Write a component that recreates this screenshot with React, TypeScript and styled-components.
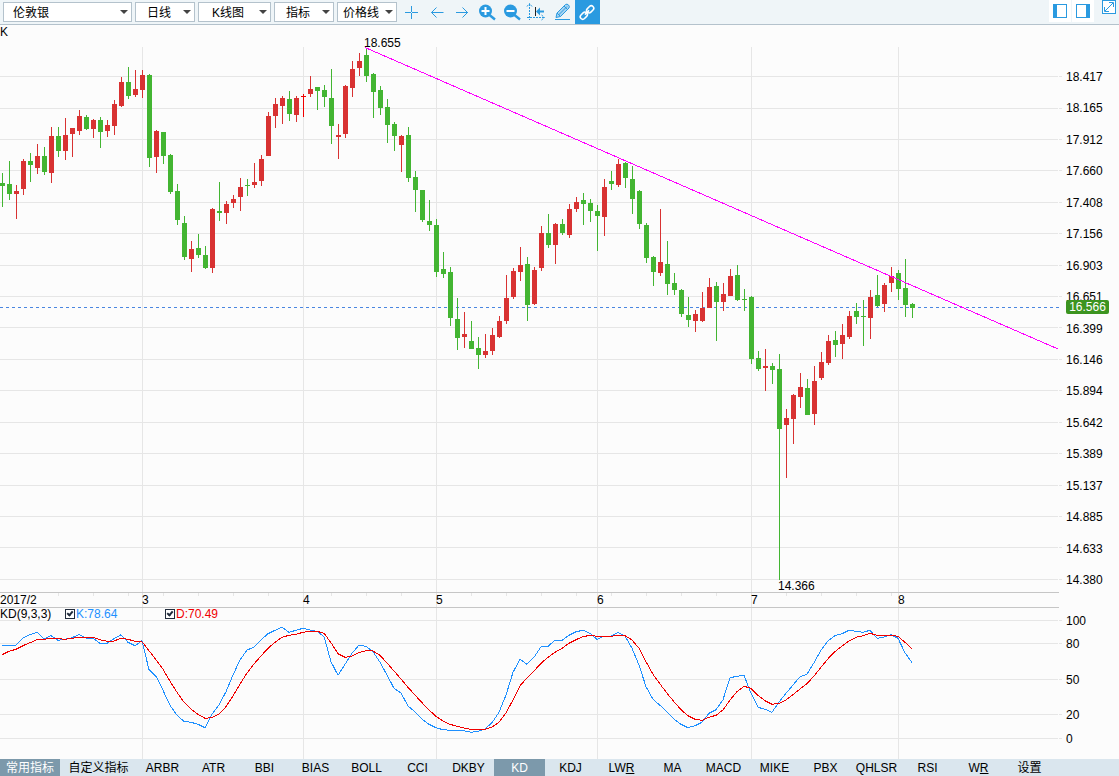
import React, { useState } from 'react';
import styled, { createGlobalStyle, css } from 'styled-components';

const BLUE = '#2a9ae0';
const UP = '#d83232';
const DOWN = '#43b532';
const GRID = '#e6e6e6';
const FONT = '"Liberation Sans", "Noto Sans CJK SC", sans-serif';

const GlobalStyle = createGlobalStyle`
  *, *::before, *::after { box-sizing: border-box; }
  body {
    margin: 0;
    background: #fcfcfc;
    color: #000;
    font: 12px/14px ${FONT};
  }
`;

/* ---------- data ---------- */

type Candle = [kind: 'u' | 'd' | 'f', high: number, top: number, bottom: number, low: number];

const STEP = 7;
const PRICE_TOP = 25;
const KD_TOP = 608;

const candles: Candle[] = [
  ['d', 173, 183, 186, 207], ['d', 161, 184, 194, 200], ['u', 185, 191, 194, 219], ['u', 159, 161, 189, 195],
  ['d', 153, 161, 165, 182], ['u', 144, 156, 168, 174], ['d', 147, 156, 172, 175], ['u', 127, 136, 173, 183],
  ['d', 127, 136, 151, 157], ['u', 118, 135, 151, 160], ['u', 128, 128, 134, 157], ['u', 110, 116, 131, 135],
  ['d', 115, 117, 129, 130], ['u', 119, 120, 129, 138], ['d', 117, 120, 132, 148], ['u', 120, 125, 131, 137],
  ['u', 100, 104, 126, 135], ['u', 77, 82, 106, 107], ['d', 67, 82, 96, 99], ['u', 70, 89, 95, 97],
  ['u', 70, 75, 90, 98], ['d', 74, 75, 158, 167], ['u', 130, 131, 157, 173], ['d', 132, 132, 156, 164],
  ['d', 154, 155, 192, 194], ['d', 184, 191, 220, 225], ['d', 216, 223, 257, 260], ['u', 241, 249, 259, 272],
  ['d', 234, 248, 255, 258], ['d', 246, 255, 268, 269], ['u', 208, 209, 268, 273], ['d', 182, 211, 213, 221],
  ['u', 201, 204, 213, 224], ['u', 195, 199, 203, 208], ['u', 178, 187, 197, 211], ['d', 179, 185, 186, 196],
  ['u', 163, 182, 185, 188], ['u', 155, 159, 181, 186], ['u', 112, 116, 156, 156], ['u', 98, 104, 116, 128],
  ['u', 96, 98, 106, 124], ['d', 91, 99, 114, 121], ['u', 96, 98, 115, 122], ['f', 94, 96, 97, 117],
  ['u', 76, 89, 94, 97], ['d', 87, 87, 91, 110], ['d', 85, 90, 97, 107], ['d', 69, 98, 126, 144],
  ['u', 124, 135, 137, 159], ['u', 85, 86, 134, 138], ['u', 61, 69, 88, 97], ['u', 53, 61, 68, 76],
  ['d', 48, 55, 76, 82], ['d', 73, 74, 92, 118], ['d', 86, 90, 108, 115], ['d', 99, 107, 125, 143],
  ['d', 122, 124, 136, 151], ['u', 135, 136, 145, 172], ['d', 127, 135, 178, 182], ['d', 171, 177, 190, 212],
  ['d', 190, 190, 220, 222], ['d', 200, 221, 225, 231], ['d', 219, 225, 272, 277], ['d', 252, 269, 274, 278],
  ['d', 267, 272, 318, 326], ['d', 298, 319, 338, 350], ['u', 312, 334, 337, 348], ['d', 321, 341, 349, 349],
  ['d', 337, 348, 355, 369], ['u', 334, 351, 355, 358], ['u', 328, 335, 351, 355], ['u', 316, 321, 337, 338],
  ['u', 275, 298, 321, 324], ['u', 268, 271, 297, 299], ['u', 247, 265, 272, 281], ['d', 257, 264, 305, 321],
  ['u', 267, 270, 304, 305], ['u', 226, 233, 268, 271], ['d', 214, 233, 245, 248], ['u', 223, 224, 245, 264],
  ['d', 219, 224, 233, 235], ['u', 204, 209, 235, 238], ['u', 197, 202, 209, 212], ['d', 193, 200, 204, 225],
  ['d', 199, 203, 211, 222], ['d', 205, 211, 216, 251], ['u', 179, 187, 217, 236], ['d', 171, 181, 184, 190],
  ['u', 159, 164, 185, 187], ['d', 162, 163, 178, 188], ['d', 166, 179, 199, 214], ['d', 190, 191, 224, 229],
  ['d', 223, 225, 258, 263], ['d', 256, 257, 272, 286], ['u', 209, 262, 273, 276], ['d', 241, 264, 284, 295],
  ['d', 273, 283, 290, 295], ['d', 289, 290, 314, 317], ['d', 297, 315, 320, 327], ['u', 310, 314, 321, 332],
  ['u', 292, 308, 321, 322], ['u', 278, 287, 308, 308], ['d', 282, 286, 302, 341], ['u', 283, 294, 302, 311],
  ['u', 269, 276, 296, 296], ['d', 265, 275, 300, 301], ['d', 289, 299, 300, 311], ['d', 296, 297, 359, 364],
  ['d', 351, 358, 369, 371], ['u', 349, 366, 368, 391], ['d', 363, 366, 370, 384], ['d', 354, 369, 429, 580],
  ['u', 409, 418, 425, 478], ['u', 394, 395, 419, 444], ['u', 373, 387, 397, 408], ['d', 379, 388, 415, 415],
  ['u', 366, 381, 414, 425], ['u', 352, 362, 378, 380], ['u', 335, 341, 363, 365], ['d', 331, 340, 345, 357],
  ['u', 324, 335, 344, 359], ['u', 311, 316, 337, 339], ['d', 303, 311, 317, 324], ['d', 300, 316, 317, 346],
  ['u', 290, 297, 318, 339], ['d', 275, 295, 306, 307], ['u', 283, 285, 304, 312], ['u', 267, 276, 283, 292],
  ['d', 270, 273, 289, 300], ['d', 259, 288, 305, 317], ['d', 303, 304, 308, 318],
];

/* Oscillator samples, in thirds of a pixel below y = 585. */
const kLine = [
  182, 182, 181, 159, 149, 142, 161, 152, 166, 163, 158, 149, 159, 160, 175, 175, 161, 149, 172, 182, 167, 254,
  274, 316, 361, 391, 409, 412, 418, 428, 388, 360, 320, 270, 225, 195, 187, 165, 146, 136, 127, 142, 136, 130,
  135, 139, 155, 230, 271, 238, 205, 180, 184, 200, 232, 270, 310, 324, 363, 380, 402, 418, 428, 434, 436, 436,
  437, 442, 439, 432, 413, 382, 330, 262, 223, 238, 217, 185, 184, 166, 166, 151, 140, 136, 145, 163, 154, 154,
  142, 153, 190, 240, 305, 343, 361, 381, 402, 418, 428, 422, 412, 385, 374, 344, 278, 274, 271, 325, 367, 373,
  382, 351, 325, 300, 275, 268, 233, 196, 167, 152, 146, 136, 139, 142, 136, 160, 156, 149, 160, 203, 233,
];
const dLine = [
  209, 199, 193, 182, 173, 164, 163, 160, 161, 163, 160, 157, 157, 157, 164, 169, 168, 160, 163, 169, 170, 197,
  224, 253, 289, 322, 352, 372, 388, 400, 398, 387, 365, 333, 297, 264, 237, 213, 190, 172, 157, 151, 148, 142,
  139, 139, 145, 173, 206, 217, 213, 203, 197, 198, 211, 234, 258, 282, 307, 330, 353, 375, 394, 408, 418, 424,
  429, 433, 433, 433, 426, 412, 383, 345, 302, 279, 258, 235, 217, 202, 190, 175, 164, 155, 151, 154, 154, 154,
  151, 152, 165, 190, 230, 268, 297, 325, 350, 374, 392, 403, 406, 397, 391, 375, 345, 320, 304, 310, 331, 347,
  358, 355, 345, 329, 312, 296, 273, 247, 221, 200, 183, 168, 157, 152, 145, 151, 152, 151, 154, 172, 191,
];
const toPoints = (line: number[]) => line.map((v, i) => `${2 + STEP * i},${(585 + v / 3).toFixed(1)}`).join(' ');

const priceLabels = [
  '18.417', '18.165', '17.912', '17.660', '17.408', '17.156', '16.903', '16.651', '16.399',
  '16.146', '15.894', '15.642', '15.389', '15.137', '14.885', '14.633', '14.380',
];
const priceGrid = [76, 108, 139, 170, 202, 233, 265, 296, 327, 359, 390, 422, 453, 485, 516, 547, 579];
const kdGrid: [number, string][] = [[620, '100'], [643, '80'], [679, '50'], [714, '20'], [738, '0']];
const months: [number, string][] = [[142, '3'], [303, '4'], [436, '5'], [597, '6'], [751, '7'], [898, '8']];
const weekTicks = [
  58, 93, 128, 163, 198, 233, 268, 331, 366, 401, 471, 506, 541, 576, 611, 646, 681, 716, 786, 821, 856, 891,
];

/* ---------- layout ---------- */

const Page = styled.div`
  display: flex;
  flex-direction: column;
  min-height: 100vh;
`;

const Toolbar = styled.header`
  display: flex;
  align-items: flex-start;
  height: 25px;
  background: #eff5f8;
  border-bottom: 1px solid #b4c2cc;
`;

const Pickers = styled.div`
  display: flex;
  gap: 3px;
  padding: 2px 3px;
`;

const PickerBox = styled.div<{ $width: number }>`
  position: relative;
  width: ${(p) => p.$width}px;
  height: 20px;
  &::after {
    content: '';
    position: absolute;
    right: 4px;
    top: 8px;
    border: 4px solid transparent;
    border-top-color: #444;
    border-bottom-width: 0;
    pointer-events: none;
  }
`;

const Picker = styled.select<{ $indent: number }>`
  appearance: none;
  width: 100%;
  height: 100%;
  padding: 1px 0 0 ${(p) => p.$indent}px;
  border: 1px solid #b4c2cc;
  border-radius: 0;
  background: #fff;
  color: #000;
  font: 12px/18px ${FONT};
`;

const Tools = styled.div`
  display: flex;
  flex: 1;
`;

const ToolButton = styled.button<{ $active?: boolean }>`
  width: 25px;
  height: 24px;
  padding: 0;
  border: 0;
  background: ${(p) => (p.$active ? BLUE : 'transparent')};
  svg { display: block; }
`;

const PanelButtons = styled.div`
  display: flex;
  gap: 1px;
  padding-right: 2px;
`;

const PanelButton = styled.button<{ $plain?: boolean }>`
  width: 22px;
  height: 22px;
  padding: 0;
  border: 0;
  background: ${(p) => (p.$plain ? 'transparent' : '#fff')};
  svg { display: block; }
`;

const ChartRow = styled.section`
  display: flex;
`;

const Stack = styled.div`
  display: grid;
  flex: 1;
  min-width: 0;
  > * { grid-area: 1 / 1; }
`;

const Plot = styled.svg<{ $height: number }>`
  display: block;
  width: 100%;
  height: ${(p) => p.$height}px;
  font: 12px ${FONT};
`;

const Title = styled.h1`
  align-self: start;
  margin: 0;
  font: 12px/14px ${FONT};
`;

const Axis = styled.div<{ $top: number }>`
  position: relative;
  display: flex;
  flex-direction: column;
  justify-content: space-between;
  width: 57px;
  padding: ${(p) => p.$top}px 0 0 4px;
`;

const PriceAxis = styled(Axis)`
  padding-bottom: 21px;
`;

const PriceTag = styled.output`
  position: absolute;
  left: 4px;
  top: 275px;
  width: 43px;
  height: 14px;
  border-radius: 2px;
  background: #3c9420;
  color: #fff;
  text-align: center;
`;

const KdAxis = styled(Axis)`
  display: block;
`;

const KdLabel = styled.div<{ $space: number }>`
  margin-bottom: ${(p) => p.$space}px;
`;

const Legend = styled.div`
  display: flex;
  align-self: start;
  height: 12px;
  line-height: 12px;
`;

const LegendName = styled.span`
  width: 65px;
`;

const LegendItem = styled.label<{ $color: string }>`
  display: flex;
  align-items: center;
  gap: 1px;
  width: 100px;
  color: ${(p) => p.$color};
`;

const Check = styled.input`
  appearance: none;
  position: relative;
  width: 10px;
  height: 10px;
  margin: 0;
  border: 1px solid #222c3c;
  background: #fff;
  &:checked::after {
    content: '';
    position: absolute;
    left: 2px;
    top: 0;
    width: 4px;
    height: 6px;
    border: solid #222c3c;
    border-width: 0 2px 2px 0;
    transform: rotate(40deg);
  }
`;

const TabBar = styled.nav`
  display: flex;
  height: 17px;
  background: #dae6ee;
`;

const activeTab = css`
  background: #7c99ab;
  color: #fff;
`;

const Tab = styled.button<{ $width: number; $active?: boolean }>`
  width: ${(p) => p.$width}px;
  padding: 2px 0 0;
  border: 0;
  background: transparent;
  color: #000;
  font: 12px/15px ${FONT};
  white-space: nowrap;
  ${(p) => p.$active && activeTab}
`;

/* ---------- icons ---------- */

type IconName = 'cross' | 'left' | 'right' | 'in' | 'out' | 'axis' | 'pencil' | 'link';

const Magnifier = ({ plus }: { plus?: boolean }) => (
  <>
    <circle cx="10.500" cy="11" r="6.500" fill={BLUE} />
    <path d="M14.500 15l5.500 4.500" stroke={BLUE} strokeWidth="2.400" fill="none" />
    <path d={plus ? 'M6.500 11h8M10.500 7v8' : 'M6.500 11h8'} stroke="#fff" strokeWidth="2" fill="none" />
  </>
);

const icons: Record<IconName, React.ReactNode> = {
  cross: <path d="M5 12.500h6M12 12.500h6M11.500 6v6M11.500 13v6" stroke={BLUE} fill="none" />,
  left: <path d="M6.500 12.500h12M11.500 7.500l-5 5 5 5" stroke={BLUE} fill="none" />,
  right: <path d="M6 12.500h12M12.500 7.500l5 5-5 5" stroke={BLUE} fill="none" />,
  in: <Magnifier plus />,
  out: <Magnifier />,
  axis: (
    <>
      <path d="M4.500 4v16M2 17.500h17M2 6.500l2.500-3 2.500 3M16.500 15l3 2.500-3 2.500" stroke={BLUE} fill="none" strokeDasharray="2 1" />
      <path d="M10.500 7v9" stroke="#222" fill="none" />
      <path d="M11 11.500l4-4v3h4v2h-4v3z" fill={BLUE} />
    </>
  ),
  pencil: (
    <>
      <path d="M5 19.500h15" stroke={BLUE} fill="none" />
      <path d="M6 17.500l1-4.500L15.500 4.500q1.500-1 3 .5t.5 3L10.500 16.500z" fill="#a8d4f2" stroke={BLUE} />
      <path d="M8.500 15L17 6.500M7 13l3.500 3.500M14 6l3.500 3.500" stroke={BLUE} fill="none" />
    </>
  ),
  link: (
    <g transform="rotate(-45 12 12.500)" fill="none" stroke="#fff" strokeWidth="1.500">
      <rect x="3.500" y="10" width="8" height="5" rx="2.500" />
      <rect x="12.500" y="10" width="8" height="5" rx="2.500" />
      <path d="M9 12.500h6" />
    </g>
  ),
};

const toolList: [IconName, string][] = [
  ['cross', '十字光标'], ['left', '左移'], ['right', '右移'], ['in', '放大'],
  ['out', '缩小'], ['axis', '坐标'], ['pencil', '画线'], ['link', '联动'],
];

const PanelIcon = ({ side }: { side: 'left' | 'right' }) => (
  <svg width="22" height="22" shapeRendering="crispEdges">
    <rect x="4.500" y="4.500" width="13" height="13" fill="#fff" stroke={BLUE} />
    <rect x={side === 'left' ? 4 : 14} y="4" width="4" height="14" fill={BLUE} />
  </svg>
);

const ExpandIcon = () => (
  <svg width="22" height="22" fill="none" stroke={BLUE}>
    <rect x="7.500" y="0.500" width="13" height="13" fill="#fff" />
    <path d="M10 11l8-8M14 2.500h4.500V7M9.500 7v4.500H14" />
  </svg>
);

/* ---------- parts ---------- */

const pickers: { label: string; name: string; width: number; indent: number }[] = [
  { label: '伦敦银', name: '品种', width: 129, indent: 9 },
  { label: '日线', name: '周期', width: 60, indent: 11 },
  { label: 'K线图', name: '图形', width: 73, indent: 13 },
  { label: '指标', name: '指标', width: 60, indent: 11 },
  { label: '价格线', name: '价格线', width: 60, indent: 5 },
];

const GridLine = ({ y }: { y: number }) => <rect x="0" y={y} width="100%" height="1" fill={GRID} />;

const AxisGap = ({ from, height }: { from: number; height: number }) => (
  <svg x="100%" overflow="visible">
    <rect x="-4" y={from} width="1" height={height} fill="#fcfcfc" />
  </svg>
);

const Candlestick = ({ index, candle }: { index: number; candle: Candle }) => {
  const [kind, high, top, bottom, low] = candle;
  const x = 2 + STEP * index;
  const color = kind === 'd' ? DOWN : kind === 'u' ? UP : '#f00000';
  return (
    <g fill={color}>
      <rect x={x} y={high} width="1" height={low - high} />
      <rect x={x - 2} y={top} width="5" height={bottom - top} />
    </g>
  );
};

const PricePlot = () => (
  <Plot $height={583} role="img" aria-label="K线">
    <svg y={-PRICE_TOP} width="100%" height="608" overflow="visible" shapeRendering="crispEdges">
      {priceGrid.map((y) => <GridLine key={y} y={y} />)}
      <AxisGap from={47} height={540} />
      {months.map(([x]) => <rect key={x} x={x} y="47" width="1" height="560" fill={GRID} />)}
      {weekTicks.map((x) => <rect key={x} x={x} y="593" width="1" height="3" fill={GRID} />)}
      <svg x="-3" width="100%" height="608" overflow="visible">
        <rect x="0" y="592" width="100%" height="1" fill="#c6c6c6" />
        <rect x="0" y="607" width="100%" height="1" fill="#c6c6c6" />
        <line x1="3" y1="307.500" x2="100%" y2="307.500" stroke="#4a86e0" strokeDasharray="3 3" />
      </svg>
      {candles.map((c, i) => <Candlestick key={i} index={i} candle={c} />)}
      <line x1="365" y1="47.500" x2="1058" y2="349" stroke="#f0f" />
      <text x="364" y="47">18.655</text>
      <text x="778" y="590">14.366</text>
      <text x="0" y="604">2017/2</text>
      {months.map(([x, label]) => <text key={x} x={x} y="604">{label}</text>)}
    </svg>
  </Plot>
);

const KdPlot = ({ showK, showD }: { showK: boolean; showD: boolean }) => (
  <Plot $height={151} role="img" aria-label="KD">
    <svg y={-KD_TOP} width="100%" height="759" overflow="visible" shapeRendering="crispEdges" fill="none">
      {kdGrid.map(([y]) => <GridLine key={y} y={y} />)}
      <AxisGap from={608} height={151} />
      {months.map(([x]) => <rect key={x} x={x} y="608" width="1" height="151" fill={GRID} />)}
      {showK && <polyline points={toPoints(kLine)} stroke="#1e90ff" />}
      {showD && <polyline points={toPoints(dLine)} stroke="#f00000" />}
    </svg>
  </Plot>
);

const tabs: React.ReactNode[] = [
  'ARBR', 'ATR', 'BBI', 'BIAS', 'BOLL', 'CCI', 'DKBY', 'KD', 'KDJ', <>LW<u>R</u></>,
  'MA', 'MACD', 'MIKE', 'PBX', 'QHLSR', 'RSI', <>W<u>R</u></>, '设置',
];

export default function App() {
  const [showK, setShowK] = useState(true);
  const [showD, setShowD] = useState(true);
  const [tab, setTab] = useState(7);

  return (
    <Page>
      <GlobalStyle />
      <Toolbar>
        <Pickers>
          {pickers.map((p) => (
            <PickerBox key={p.name} $width={p.width}>
              <Picker $indent={p.indent} aria-label={p.name}>
                <option>{p.label}</option>
              </Picker>
            </PickerBox>
          ))}
        </Pickers>
        <Tools>
          {toolList.map(([name, label]) => (
            <ToolButton key={name} $active={name === 'link'} aria-label={label}>
              <svg width="25" height="24">{icons[name]}</svg>
            </ToolButton>
          ))}
        </Tools>
        <PanelButtons>
          <PanelButton aria-label="左侧栏"><PanelIcon side="left" /></PanelButton>
          <PanelButton aria-label="右侧栏"><PanelIcon side="right" /></PanelButton>
          <PanelButton $plain aria-label="全屏"><ExpandIcon /></PanelButton>
        </PanelButtons>
      </Toolbar>

      <ChartRow>
        <Stack>
          <PricePlot />
          <Title>K</Title>
        </Stack>
        <PriceAxis $top={45}>
          {priceLabels.map((label) => <div key={label}>{label}</div>)}
          <PriceTag>16.566</PriceTag>
        </PriceAxis>
      </ChartRow>

      <ChartRow>
        <Stack>
          <KdPlot showK={showK} showD={showD} />
          <Legend>
            <LegendName>KD(9,3,3)</LegendName>
            <LegendItem $color="#1e90ff">
              <Check type="checkbox" checked={showK} onChange={() => setShowK(!showK)} />
              K:78.64
            </LegendItem>
            <LegendItem $color="#f00000">
              <Check type="checkbox" checked={showD} onChange={() => setShowD(!showD)} />
              D:70.49
            </LegendItem>
          </Legend>
        </Stack>
        <KdAxis $top={6}>
          {kdGrid.map(([y, label], i) => (
            <KdLabel key={label} $space={i < kdGrid.length - 1 ? kdGrid[i + 1][0] - y - 14 : 0}>{label}</KdLabel>
          ))}
        </KdAxis>
      </ChartRow>

      <TabBar>
        <Tab $width={60} $active>常用指标</Tab>
        <Tab $width={77}>自定义指标</Tab>
        {tabs.map((label, i) => (
          <Tab key={i} $width={51} $active={i === tab} onClick={() => setTab(i)}>{label}</Tab>
        ))}
      </TabBar>
    </Page>
  );
}
